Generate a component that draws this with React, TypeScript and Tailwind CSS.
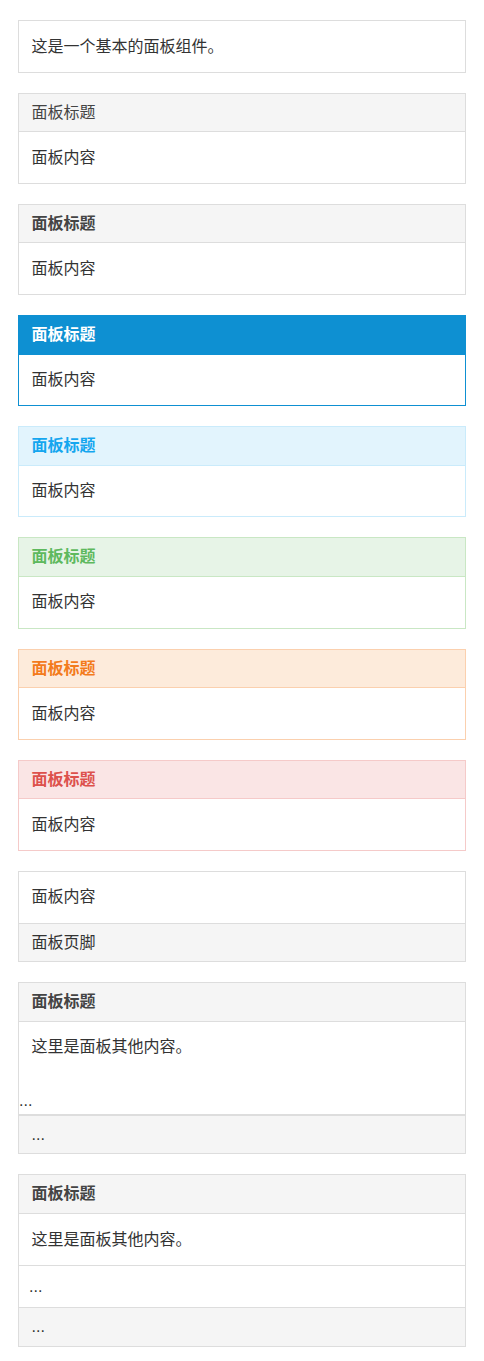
import React from "react";

type Variant = "default" | "primary" | "secondary" | "success" | "warning" | "danger";

const styles: Record<Variant, { border: string; hd: string; title: string }> = {
  default: { border: "border-[#dddddd]", hd: "bg-[#f5f5f5] border-b border-[#dddddd]", title: "text-[#444444]" },
  primary: { border: "border-[#0e90d2]", hd: "bg-[#0e90d2] border-b border-[#0e90d2]", title: "text-white" },
  secondary: { border: "border-[#caebfb]", hd: "bg-[#e2f4fd] border-b border-[#caebfb]", title: "text-[#14a6ef]" },
  success: { border: "border-[#c9e7c4]", hd: "bg-[#e7f4e7] border-b border-[#c9e7c4]", title: "text-[#5eb95e]" },
  warning: { border: "border-[#fbd0ae]", hd: "bg-[#fdebdb] border-b border-[#fbd0ae]", title: "text-[#f37b1d]" },
  danger: { border: "border-[#f5cac9]", hd: "bg-[#fae5e5] border-b border-[#f5cac9]", title: "text-[#dd514c]" },
};

function Panel({ variant = "default", children }: { variant?: Variant; children: React.ReactNode }) {
  return <div className={`mb-[20px] border bg-white ${styles[variant].border}`}>{children}</div>;
}

function Hd({ variant = "default", bold = true, children }: { variant?: Variant; bold?: boolean; children: React.ReactNode }) {
  const s = styles[variant];
  return (
    <div className={`px-[12.5px] py-[6px] ${s.hd}`}>
      <h3 className={`${bold ? "font-bold" : "font-normal"} ${s.title}`}>{children}</h3>
    </div>
  );
}

function Bd({ children }: { children: React.ReactNode }) {
  return <div className="p-[12.5px]">{children}</div>;
}

function Footer({ children }: { children: React.ReactNode }) {
  return <div className="border-t border-[#dddddd] bg-[#f5f5f5] px-[12.5px] py-[6px]">{children}</div>;
}

export default function App() {
  return (
    <div
      className="min-h-[1361px] bg-white px-[18px] pt-[20px] text-[16px] leading-[1.6] text-[#333333]"
      style={{ fontFamily: '"Liberation Sans", "Noto Sans CJK SC", sans-serif' }}
    >
      <Panel>
        <Bd>这是一个基本的面板组件。</Bd>
      </Panel>

      <Panel>
        <Hd bold={false}>面板标题</Hd>
        <Bd>面板内容</Bd>
      </Panel>

      <Panel>
        <Hd>面板标题</Hd>
        <Bd>面板内容</Bd>
      </Panel>

      <Panel variant="primary">
        <Hd variant="primary">面板标题</Hd>
        <Bd>面板内容</Bd>
      </Panel>

      <Panel variant="secondary">
        <Hd variant="secondary">面板标题</Hd>
        <Bd>面板内容</Bd>
      </Panel>

      <Panel variant="success">
        <Hd variant="success">面板标题</Hd>
        <Bd>面板内容</Bd>
      </Panel>

      <Panel variant="warning">
        <Hd variant="warning">面板标题</Hd>
        <Bd>面板内容</Bd>
      </Panel>

      <Panel variant="danger">
        <Hd variant="danger">面板标题</Hd>
        <Bd>面板内容</Bd>
      </Panel>

      <Panel>
        <Bd>面板内容</Bd>
        <Footer>面板页脚</Footer>
      </Panel>

      <Panel>
        <Hd>面板标题</Hd>
        <Bd>这里是面板其他内容。</Bd>
        <div className="mt-[16px] border-b border-[#dddddd]">...</div>
        <Footer>...</Footer>
      </Panel>

      <Panel>
        <Hd>面板标题</Hd>
        <Bd>这里是面板其他内容。</Bd>
        <ul className="border-t border-[#dddddd]">
          <li className="px-[10px] py-[8px]">...</li>
        </ul>
        <Footer>...</Footer>
      </Panel>
    </div>
  );
}
